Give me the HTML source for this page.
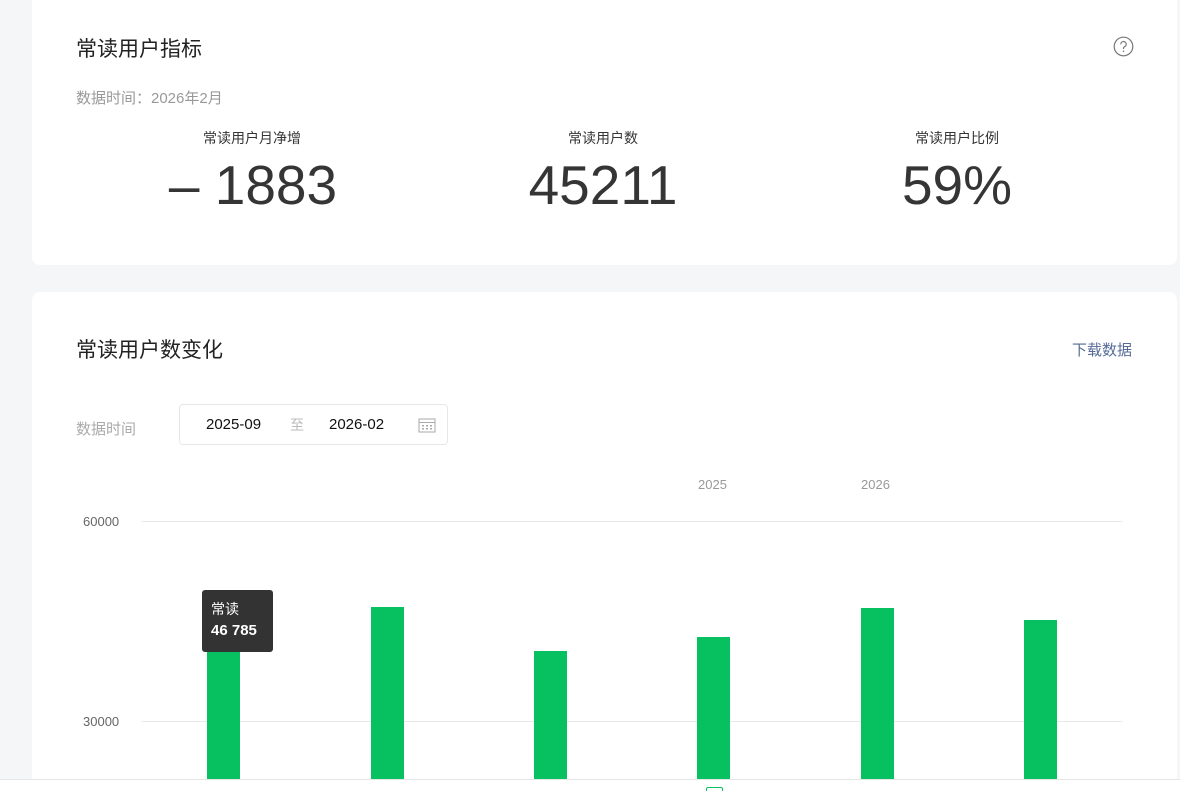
<!DOCTYPE html>
<html><head><meta charset="utf-8"><style>
*{margin:0;padding:0;box-sizing:border-box}
html,body{width:1180px;height:791px;overflow:hidden}
body{background:#f5f6f7;font-family:"Liberation Sans","Noto Sans CJK SC",sans-serif;position:relative}
.card{position:absolute;left:32px;width:1145px;background:#fff;border-radius:8px}
.abs{position:absolute;white-space:nowrap}
.t{font-size:21px;color:#222}
.lbl{font-size:14px;color:#353535;transform:translateX(-50%)}
.num{font-size:55px;color:#353535;transform:translateX(-50%);line-height:1}
.bar{position:absolute;width:33px;background:#07c160;bottom:0}
</style></head><body>
<div class="card" style="top:-10px;height:275px">
 <div class="abs t" style="left:44px;top:43px">常读用户指标</div>
 <svg class="abs" style="left:1081px;top:46px" width="21" height="21" viewBox="0 0 21 21"><circle cx="10.5" cy="10.5" r="9.3" fill="none" stroke="#777" stroke-width="1.2"/><path d="M7.8 8.3a2.7 2.7 0 1 1 3.8 2.4c-.8.4-1.1.9-1.1 1.7v.6" fill="none" stroke="#777" stroke-width="1.2"/><circle cx="10.5" cy="15.3" r=".8" fill="#777"/></svg>
 <div class="abs" style="left:44px;top:97px;font-size:15px;color:#999">数据时间：2026年2月</div>
 <div class="abs lbl" style="left:220px;top:138px">常读用户月净增</div>
 <div class="abs lbl" style="left:571px;top:138px">常读用户数</div>
 <div class="abs lbl" style="left:925px;top:138px">常读用户比例</div>
 <div class="abs num" style="left:221px;top:168px">– 1883</div>
 <div class="abs num" style="left:571px;top:168px">45211</div>
 <div class="abs num" style="left:925px;top:168px">59%</div>
</div>
<div class="card" style="top:292px;height:500px">
 <div class="abs t" style="left:44px;top:42px">常读用户数变化</div>
 <div class="abs" style="left:1040px;top:47px;font-size:15px;color:#576b95">下载数据</div>
 <div class="abs" style="left:44px;top:126px;font-size:15px;color:#aaa">数据时间</div>
 <div class="abs" style="left:147px;top:112px;width:269px;height:41px;border:1px solid #e7e7e7;border-radius:4px">
  <div class="abs" style="left:26px;top:11px;font-size:15px;color:#111">2025-09</div>
  <div class="abs" style="left:110px;top:10px;font-size:14px;color:#bbb">至</div>
  <div class="abs" style="left:149px;top:11px;font-size:15px;color:#111">2026-02</div>
  <svg class="abs" style="left:238px;top:12px" width="18" height="16" viewBox="0 0 18 16"><rect x="1" y="2" width="16" height="13" fill="none" stroke="#aaa"/><path d="M1 5.5h16" stroke="#aaa"/><g fill="#aaa"><rect x="4" y="8" width="2" height="1.5"/><rect x="8" y="8" width="2" height="1.5"/><rect x="12" y="8" width="2" height="1.5"/><rect x="4" y="11" width="2" height="1.5"/><rect x="8" y="11" width="2" height="1.5"/><rect x="12" y="11" width="2" height="1.5"/></g></svg>
 </div>
 <div class="abs" style="left:666px;top:185px;font-size:13px;color:#999">2025</div>
 <div class="abs" style="left:829px;top:185px;font-size:13px;color:#999">2026</div>
 <div class="abs" style="left:51px;top:222px;font-size:13px;color:#666">60000</div>
 <div class="abs" style="left:51px;top:422px;font-size:13px;color:#666">30000</div>
 <div class="abs" style="left:110px;top:229px;width:980px;height:1px;background:#e8e8e8"></div>
 <div class="abs" style="left:110px;top:429px;width:980px;height:1px;background:#e8e8e8"></div>
 <div class="abs" style="left:0;top:0;width:1145px;height:487px">
  <div class="bar" style="left:175px;height:139px"></div>
  <div class="bar" style="left:339px;height:172px"></div>
  <div class="bar" style="left:502px;height:128px"></div>
  <div class="bar" style="left:665px;height:142px"></div>
  <div class="bar" style="left:829px;height:171px"></div>
  <div class="bar" style="left:992px;height:159px"></div>
 </div>
 <div class="abs" style="left:170px;top:298px;width:71px;height:62px;background:#333;border-radius:3px;color:#fff">
  <div class="abs" style="left:9px;top:9px;font-size:14px">常读</div>
  <div class="abs" style="left:9px;top:32px;font-size:15px;font-weight:bold">46 785</div>
 </div>
</div>
<div class="abs" style="left:0;top:779px;width:1180px;height:12px;background:#fff;border-top:1px solid #e5e5e5"></div>
<div class="abs" style="left:706px;top:787px;width:17px;height:8px;border:1.5px solid #07c160;border-radius:2px"></div>
</body></html>
